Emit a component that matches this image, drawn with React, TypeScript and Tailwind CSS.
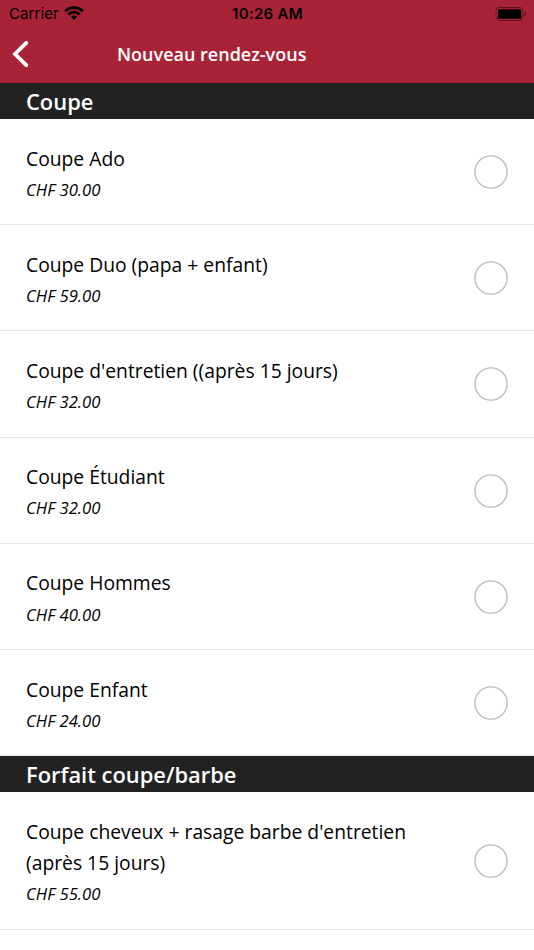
const sections = [
  {
    title: 'Coupe',
    items: [
      { name: 'Coupe Ado', price: 'CHF 30.00' },
      { name: 'Coupe Duo (papa + enfant)', price: 'CHF 59.00' },
      { name: "Coupe d'entretien ((après 15 jours)", price: 'CHF 32.00' },
      { name: 'Coupe Étudiant', price: 'CHF 32.00' },
      { name: 'Coupe Hommes', price: 'CHF 40.00' },
      { name: 'Coupe Enfant', price: 'CHF 24.00' },
    ],
  },
  {
    title: 'Forfait coupe/barbe',
    items: [{ name: "Coupe cheveux + rasage barbe d'entretien (après 15 jours)", price: 'CHF 55.00' }],
  },
];

function StatusBar() {
  return (
    <div className="grid grid-cols-3 items-center h-7 pl-[9px] pr-2 text-black font-['Inter',sans-serif]">
      <div className="flex items-center gap-[5px] text-[15px] tracking-[0.1px]">
        Carrier
        <svg className="-mt-[2px]" width="20" height="14" viewBox="0 0 20 14" fill="none" stroke="currentColor" strokeWidth="2.8">
          <path d="M1.2 5.2a12.4 12.4 0 0 1 17.6 0" />
          <path d="M4.4 8.5a7.9 7.9 0 0 1 11.2 0" />
          <path d="M10 13.9 6.9 10.8a4.4 4.4 0 0 1 6.2 0Z" fill="currentColor" stroke="none" />
        </svg>
      </div>
      <div className="text-center text-[15px] font-semibold tracking-[0.3px]">10:26 AM</div>
      <svg className="justify-self-end -mt-px" width="31" height="14" viewBox="0 0 31 14">
        <rect x="1" y="0.5" width="27" height="13" rx="3.5" fill="none" stroke="black" strokeOpacity="0.45" />
        <rect x="3" y="2.2" width="23.2" height="9.6" rx="1.6" />
        <path d="M29.5 4.8v4.4c1.8-.7 1.8-3.7 0-4.4Z" fillOpacity="0.45" />
      </svg>
    </div>
  );
}

export default function App() {
  return (
    <div className="w-full h-[950px] overflow-hidden bg-white text-black font-['Open_Sans',sans-serif]">
      <header className="h-[83px] bg-[#a92336]">
        <StatusBar />
        <div className="flex items-center h-[52px] pl-3">
          <svg width="18" height="28" viewBox="0 0 18 28" fill="none" stroke="white" strokeWidth="3.8" strokeLinecap="round">
            <path d="M14.3 2.8 3 14l11.3 11.2" />
          </svg>
          <h1 className="ml-[87px] text-[18px] font-semibold text-white">Nouveau rendez-vous</h1>
        </div>
      </header>

      {sections.map((section) => (
        <section key={section.title}>
          <h2 className="flex items-center h-9 pl-[26px] pt-[2px] bg-[#222222] text-white text-[21.9px] font-semibold">
            {section.title}
          </h2>
          {section.items.map((item) => (
            <div
              key={item.name}
              className="flex items-center justify-between px-[26px] pt-[23.6px] pb-[17.6px] border-b border-[#e4e4e4]"
            >
              <div className="max-w-[400px]">
                <div className="text-[19.3px] leading-[31.2px]">{item.name}</div>
                <div className="text-[16.7px] leading-[32.8px] italic">{item.price}</div>
              </div>
              <svg className="-mt-[5px] shrink-0" width="34" height="34" viewBox="0 0 34 34" fill="none">
                <circle cx="17" cy="17" r="16.1" stroke="#bdbdbd" strokeWidth="1.4" />
              </svg>
            </div>
          ))}
        </section>
      ))}
    </div>
  );
}
